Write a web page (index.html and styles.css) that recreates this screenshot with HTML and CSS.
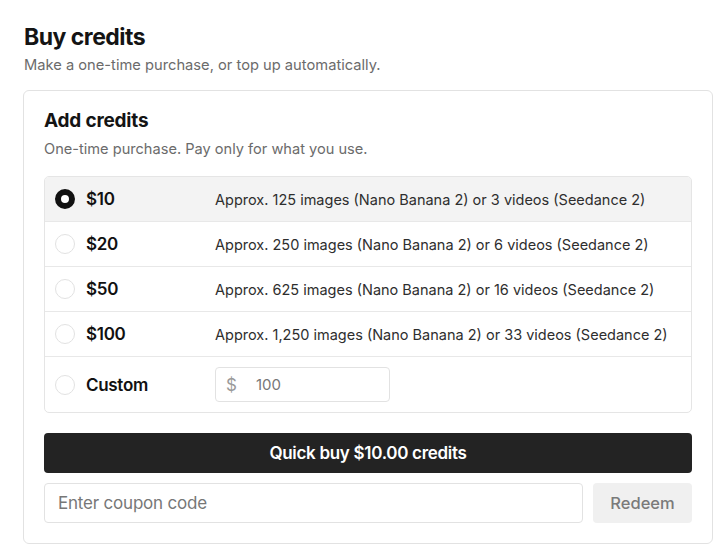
FILE: index.html
```html
<!DOCTYPE html>
<html>
<head>
<meta charset="utf-8">
<link rel="stylesheet" href="styles.css">
</head>
<body>
<div class="page">
  <h1 class="title">Buy credits</h1>
  <p class="subtitle">Make a one-time purchase, or top up automatically.</p>
  <section class="card">
    <h2 class="card-title">Add credits</h2>
    <p class="card-sub">One-time purchase. Pay only for what you use.</p>
    <div class="options">
      <div class="row selected">
        <span class="radio on"></span>
        <span class="amount">$10</span>
        <span class="desc">Approx. 125 images (Nano Banana 2) or 3 videos (Seedance 2)</span>
      </div>
      <div class="row">
        <span class="radio"></span>
        <span class="amount">$20</span>
        <span class="desc">Approx. 250 images (Nano Banana 2) or 6 videos (Seedance 2)</span>
      </div>
      <div class="row">
        <span class="radio"></span>
        <span class="amount">$50</span>
        <span class="desc">Approx. 625 images (Nano Banana 2) or 16 videos (Seedance 2)</span>
      </div>
      <div class="row">
        <span class="radio"></span>
        <span class="amount">$100</span>
        <span class="desc">Approx. 1,250 images (Nano Banana 2) or 33 videos (Seedance 2)</span>
      </div>
      <div class="row custom">
        <span class="radio"></span>
        <span class="amount">Custom</span>
        <div class="custom-input"><span class="dollar">$</span><span class="val">100</span></div>
      </div>
    </div>
    <button class="buy">Quick buy $10.00 credits</button>
    <div class="coupon">
      <div class="coupon-input">Enter coupon code</div>
      <button class="redeem">Redeem</button>
    </div>
  </section>
</div>
</body>
</html>
```

FILE: styles.css
```css
* { box-sizing: border-box; }
html, body { margin: 0; padding: 0; background: #fff; }
body { font-family: Inter, "Noto Sans", sans-serif; color: #111; }
.page { padding: 21px 5px 0 23px; }
.title { margin: 0 0 0 1px; font-size: 23px; line-height: 32px; font-weight: 700; letter-spacing: -0.5px; color: #141414; }
.subtitle { margin: 2px 0 0 1px; font-size: 14.7px; line-height: 20px; color: #6b6b6b; }
.card { margin-top: 15px; width: 690px; border: 1px solid #e2e2e2; border-radius: 6px; padding: 18px 20px 20px; }
.card-title { margin: 0; font-size: 19px; line-height: 24px; font-weight: 700; letter-spacing: -0.2px; color: #141414; }
.card-sub { margin: 6px 0 0; font-size: 14.6px; line-height: 20px; color: #6b6b6b; }
.options { margin-top: 17px; border: 1px solid #e5e5e5; border-radius: 5px; overflow: hidden; }
.row { display: grid; grid-template-columns: 20px 118px 1fr; column-gap: 11px; align-items: center; height: 45px; padding: 0 10px; border-bottom: 1px solid #e8e8e8; }
.row.custom { height: 55px; border-bottom: none; }
.row.selected { background: #f3f3f3; }
.radio { width: 20px; height: 20px; border-radius: 50%; border: 1px solid #e2e2e2; background: #fff; }
.radio.on { border: 6px solid #111; background: #fff; }
.amount { font-size: 17px; font-weight: 600; letter-spacing: -0.3px; color: #111; }
.desc { font-size: 14.5px; color: #2e2e2e; }
.custom-input { width: 175px; height: 35px; border: 1px solid #e2e2e2; border-radius: 4px; display: flex; align-items: center; padding-left: 10px; font-size: 15px; }
.dollar { color: #9a9a9a; font-size: 17px; width: 30px; }
.val { color: #777; }
.buy { display: block; width: 100%; height: 40px; margin-top: 20px; border: none; border-radius: 4px; background: #232323; color: #fff; font-family: inherit; font-size: 17px; font-weight: 600; letter-spacing: -0.3px; }
.coupon { display: flex; gap: 10px; margin-top: 10px; }
.coupon-input { flex: 1; height: 40px; border: 1px solid #e2e2e2; border-radius: 4px; display: flex; align-items: center; padding-left: 13px; font-size: 17px; color: #777; letter-spacing: -0.2px; }
.redeem { width: 99px; height: 40px; border: none; border-radius: 4px; background: #f0f0f0; color: #7a7a7a; font-family: inherit; font-size: 16.5px; font-weight: 500; }
```
